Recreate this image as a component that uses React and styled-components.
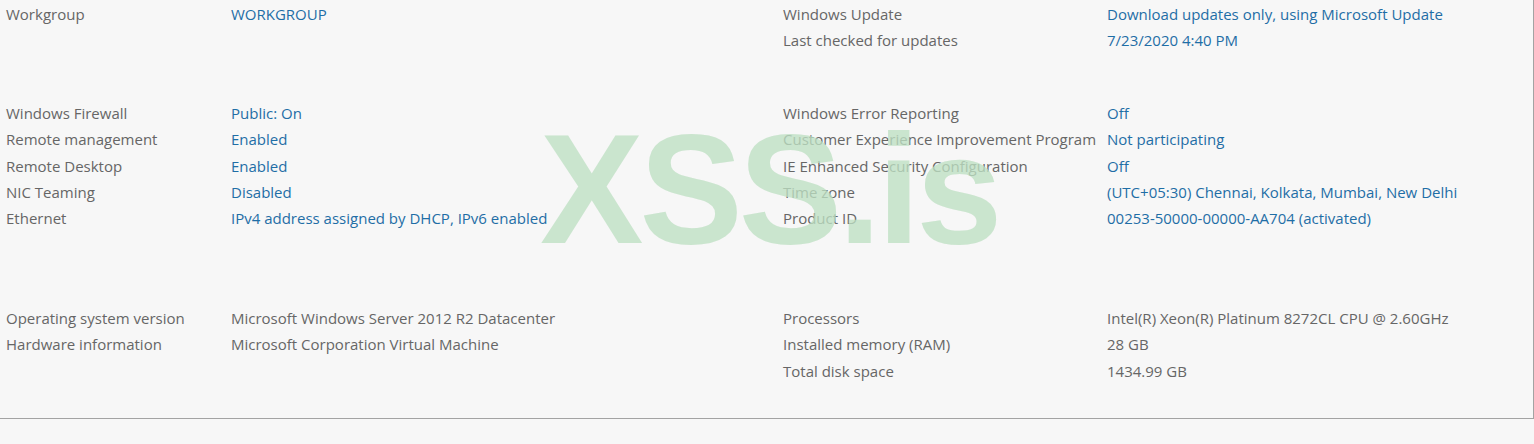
import React from 'react'
import styled, { createGlobalStyle } from 'styled-components'

const Global = createGlobalStyle`
body {
  margin:0;
  background:#f7f7f7;
  font-family:"Open Sans", "Noto Sans", sans-serif;
}
`;

const Panel = styled.div`
position:relative;
background:#f7f7f7;
border-right:1px solid #a3a3a3;
border-bottom:1px solid #a3a3a3;
padding:1px 0 34px 0;
overflow:hidden;
`;

const Group = styled.div`
display:flex;
margin-top:${p => p.gap || 0}px;
`;

const Half = styled.div`
box-sizing:border-box;
display:grid;
grid-template-columns:${p => p.labelWidth}px 1fr;
grid-auto-rows:26.25px;
align-items:center;
padding-left:${p => p.left}px;
width:${p => p.width}px;
flex:${p => (p.width ? 'none' : 1)};
`;

const Label = styled.div`
font-size:15px;
color:#666;
white-space:nowrap;
`;

const Value = styled.div`
font-size:15px;
color:${p => (p.link ? '#1f6ea6' : '#666')};
white-space:nowrap;
`;

const Watermark = styled.div`
position:absolute;
left:540px;
top:112px;
font-family:"Liberation Sans", Arial, sans-serif;
font-weight:700;
font-size:155px;
line-height:1;
letter-spacing:-4px;
color:rgb(190,224,195);
opacity:0.78;
pointer-events:none;
`;

const groups = [
  {
    gap: 0,
    left: [['Workgroup', 'WORKGROUP', true]],
    right: [
      ['Windows Update', 'Download updates only, using Microsoft Update', true],
      ['Last checked for updates', '7/23/2020 4:40 PM', true],
    ],
  },
  {
    gap: 46.5,
    left: [
      ['Windows Firewall', 'Public: On', true],
      ['Remote management', 'Enabled', true],
      ['Remote Desktop', 'Enabled', true],
      ['NIC Teaming', 'Disabled', true],
      ['Ethernet', 'IPv4 address assigned by DHCP, IPv6 enabled', true],
    ],
    right: [
      ['Windows Error Reporting', 'Off', true],
      ['Customer Experience Improvement Program', 'Not participating', true],
      ['IE Enhanced Security Configuration', 'Off', true],
      ['Time zone', '(UTC+05:30) Chennai, Kolkata, Mumbai, New Delhi', true],
      ['Product ID', '00253-50000-00000-AA704 (activated)', true],
    ],
  },
  {
    gap: 73.75,
    left: [
      ['Operating system version', 'Microsoft Windows Server 2012 R2 Datacenter', false],
      ['Hardware information', 'Microsoft Corporation Virtual Machine', false],
    ],
    right: [
      ['Processors', 'Intel(R) Xeon(R) Platinum 8272CL CPU @ 2.60GHz', false],
      ['Installed memory (RAM)', '28 GB', false],
      ['Total disk space', '1434.99 GB', false],
    ],
  },
];

const Rows = ({ rows }) =>
  rows.map(([label, value, link]) => (
    <React.Fragment key={label}>
      <Label>{label}</Label>
      <Value link={link}>{value}</Value>
    </React.Fragment>
  ));

const App = () => {
  return (
    <>
      <Global />
      <Panel>
        {groups.map((g, i) => (
          <Group key={i} gap={g.gap}>
            <Half left={6} width={783} labelWidth={225}>
              <Rows rows={g.left} />
            </Half>
            <Half left={0} labelWidth={324}>
              <Rows rows={g.right} />
            </Half>
          </Group>
        ))}
        <Watermark>XSS.is</Watermark>
      </Panel>
    </>
  )
}

export default App
